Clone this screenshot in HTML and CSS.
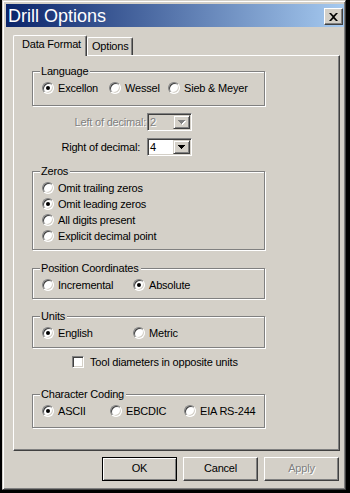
FILE: index.html
```html
<!DOCTYPE html>
<html>
<head>
<meta charset="utf-8">
<title>Drill Options</title>
<link rel="stylesheet" href="styles.css">
</head>
<body>
<div class="window">
  <div class="titlebar">
    <span class="title">Drill Options</span>
    <span class="close"><svg width="9" height="8" viewBox="0 0 9 8"><path d="M0 0h2l2.5 2.5L7 0h2L5.5 4 9 8H7L4.5 5.5 2 8H0l3.5-4z" fill="#000"/></svg></span>
  </div>
  <div class="body">
    <div class="tabs">
      <div class="tab active">Data Format</div>
      <div class="tab">Options</div>
    </div>
    <div class="panel">
      <div class="group g-lang">
        <div class="gtitle">Language</div>
        <div class="opts">
          <span class="opt"><span class="radio on"></span>Excellon</span>
          <span class="opt"><span class="radio"></span>Wessel</span>
          <span class="opt"><span class="radio"></span>Sieb &amp; Meyer</span>
        </div>
      </div>

      <div class="frow r-left">
        <span class="flabel disabled">Left of decimal:</span>
        <span class="combo disabled"><span class="cval">2</span><span class="cbtn"><svg width="8" height="5" viewBox="0 0 8 5"><path class="shadow" d="M1 1h7v1h-1v1h-1v1h-1v1h-1v-1h-1v-1h-1v-1h-1z"/><path d="M0 0h7v1h-1v1h-1v1h-1v1h-1v-1h-1v-1h-1v-1h-1z"/></svg></span></span>
      </div>
      <div class="frow r-right">
        <span class="flabel">Right of decimal:</span>
        <span class="combo"><span class="cval">4</span><span class="cbtn"><svg width="8" height="5" viewBox="0 0 8 5"><path d="M0 0h7v1h-1v1h-1v1h-1v1h-1v-1h-1v-1h-1v-1h-1z"/></svg></span></span>
      </div>

      <div class="group g-zeros">
        <div class="gtitle">Zeros</div>
        <div class="opts col">
          <span class="opt"><span class="radio"></span>Omit trailing zeros</span>
          <span class="opt"><span class="radio on"></span>Omit leading zeros</span>
          <span class="opt"><span class="radio"></span>All digits present</span>
          <span class="opt"><span class="radio"></span>Explicit decimal point</span>
        </div>
      </div>

      <div class="group g-pos">
        <div class="gtitle">Position Coordinates</div>
        <div class="opts">
          <span class="opt"><span class="radio"></span>Incremental</span>
          <span class="opt"><span class="radio on"></span>Absolute</span>
        </div>
      </div>

      <div class="group g-units">
        <div class="gtitle">Units</div>
        <div class="opts">
          <span class="opt"><span class="radio on"></span>English</span>
          <span class="opt"><span class="radio"></span>Metric</span>
        </div>
      </div>

      <div class="checkrow">
        <span class="checkbox"></span>Tool diameters in opposite units
      </div>

      <div class="group g-char">
        <div class="gtitle">Character Coding</div>
        <div class="opts">
          <span class="opt"><span class="radio on"></span>ASCII</span>
          <span class="opt"><span class="radio"></span>EBCDIC</span>
          <span class="opt"><span class="radio"></span>EIA RS-244</span>
        </div>
      </div>
    </div>
    <div class="buttons">
      <span class="btn default">OK</span>
      <span class="btn">Cancel</span>
      <span class="btn disabled">Apply</span>
    </div>
  </div>
</div>
</body>
</html>
```

FILE: styles.css
```css
* { box-sizing: border-box; }

html, body {
  margin: 0;
  width: 350px;
  height: 493px;
  overflow: hidden;
  background: #000;
}

body {
  font-family: "Liberation Sans", Arial, sans-serif;
  font-size: 11px;
  letter-spacing: -0.2px;
  color: #000;
}

.window {
  margin-left: 2px;
  width: 344px;
  height: 490px;
  background: #d4d0c8;
  border: 1px solid;
  border-color: #d4d0c8 #404040 #404040 #d4d0c8;
  box-shadow: inset 1px 1px #fff, inset -1px -1px #808080;
  padding: 3px 1px 0 3px;
}

.titlebar {
  height: 23px;
  display: flex;
  justify-content: space-between;
  background: linear-gradient(to right, #0a246a, #a6caf0);
  color: #fff;
  padding-left: 2px;
}

.title {
  font-size: 18px;
  line-height: 25px;
  letter-spacing: 0;
}

.close {
  width: 19px;
  height: 17px;
  margin-top: 4px;
  margin-right: 1px;
  background: #d4d0c8;
  border: 1px solid;
  border-color: #fff #404040 #404040 #fff;
  box-shadow: inset -1px -1px #808080;
  display: flex;
  align-items: center;
  justify-content: center;
}

.body {
  padding: 0 4px 0 7px;
}

.tabs {
  margin-top: 8px;
  height: 20px;
  display: flex;
  align-items: flex-end;
}

.tab {
  background: #d4d0c8;
  border-left: 1px solid #fff;
  border-top: 1px solid #fff;
  border-right: 1px solid #404040;
  box-shadow: inset -1px 0 #808080;
  border-top-left-radius: 2px;
  border-top-right-radius: 2px;
  height: 18px;
  width: 46px;
  padding: 2px 0 0 4px;
  line-height: 13px;
  white-space: nowrap;
}

.tab.active {
  position: relative;
  z-index: 1;
  height: 21px;
  width: 74px;
  margin-bottom: -1px;
  padding-left: 8px;
}

.panel {
  height: 396px;
  border: 1px solid;
  border-color: #fff #404040 #404040 #fff;
  box-shadow: inset -1px -1px #808080;
  padding: 15px 0 0 18px;
}

.group {
  width: 233px;
  border: 1px solid #808080;
  box-shadow: 1px 1px #fff, inset 1px 1px #fff;
  padding-left: 9px;
}

.gtitle {
  display: table;
  margin: -7px 0 2px -2px;
  padding: 0 2px 0 1px;
  line-height: 13px;
  background: #d4d0c8;
  white-space: nowrap;
}

.opts {
  display: grid;
  height: 16px;
  align-items: center;
}

.opts.col {
  display: flex;
  flex-direction: column;
  align-items: flex-start;
  height: auto;
}

.opt {
  display: flex;
  align-items: center;
  gap: 4px;
  height: 16px;
  line-height: 16px;
  white-space: nowrap;
}

.radio {
  width: 12px;
  height: 12px;
  flex: none;
  border-radius: 50%;
  background: #fff;
  border: 1px solid;
  border-color: #808080 #fff #fff #808080;
  box-shadow: inset 1px 1px #404040, inset -1px -1px #d4d0c8;
  display: flex;
  align-items: center;
  justify-content: center;
}

.radio.on::after {
  content: "";
  width: 4px;
  height: 4px;
  border-radius: 50%;
  background: #000;
}

.g-lang { padding-bottom: 9px; }
.g-lang .opts { grid-template-columns: 67px 59px auto; }

.g-zeros { margin-top: 15px; padding-bottom: 5px; }

.g-pos { margin-top: 18px; padding-bottom: 5px; }
.g-pos .opts { grid-template-columns: 91px auto; }

.g-units { margin-top: 17px; padding-bottom: 6px; }
.g-units .opts { grid-template-columns: 91px auto; }

.g-char { margin-top: 25px; padding-bottom: 8px; }
.g-char .opts { grid-template-columns: 68px 74px auto; }

.frow {
  display: flex;
  align-items: center;
  height: 18px;
  margin-top: 7px;
}

.flabel {
  width: 115px;
  text-align: right;
  white-space: nowrap;
}

.r-left .flabel { padding-right: 1px; }
.r-right .flabel { padding-right: 7px; }

.disabled {
  color: #808080;
  text-shadow: 1px 1px #fff;
}

.combo {
  width: 45px;
  height: 18px;
  display: flex;
  background: #fff;
  border: 1px solid;
  border-color: #808080 #fff #fff #808080;
  box-shadow: inset 1px 1px #404040, inset -1px -1px #d4d0c8;
  padding: 1px;
}

.combo.disabled { background: #d4d0c8; }

.cval {
  flex: 1;
  padding-left: 1px;
  line-height: 14px;
}

.cbtn {
  width: 17px;
  height: 14px;
  background: #d4d0c8;
  border: 1px solid;
  border-color: #d4d0c8 #404040 #404040 #d4d0c8;
  box-shadow: inset 1px 1px #fff, inset -1px -1px #808080;
  display: flex;
  align-items: center;
  justify-content: center;
  padding-left: 1px;
}

.cbtn svg { display: block; fill: #000; }
.cbtn .shadow { fill: transparent; }
.combo.disabled .cbtn svg path { fill: #808080; }
.combo.disabled .cbtn svg path.shadow { fill: #fff; }

.checkrow {
  display: flex;
  align-items: center;
  gap: 6px;
  height: 14px;
  margin: 7px 0 0 40px;
  white-space: nowrap;
}

.checkbox {
  width: 12px;
  height: 12px;
  flex: none;
  background: #fff;
  border: 1px solid;
  border-color: #808080 #fff #fff #808080;
  box-shadow: inset 1px 1px #404040, inset -1px -1px #d4d0c8;
}

.buttons {
  margin-top: 6px;
  display: flex;
  justify-content: flex-end;
  gap: 6px;
  padding-right: 1px;
}

.btn {
  width: 75px;
  height: 24px;
  border: 1px solid;
  border-color: #fff #404040 #404040 #fff;
  box-shadow: inset -1px -1px #808080;
  text-align: center;
  line-height: 20px;
}

.btn.default {
  border-color: #000;
  box-shadow: inset 1px 1px #fff, inset -1px -1px #808080;
}
```
